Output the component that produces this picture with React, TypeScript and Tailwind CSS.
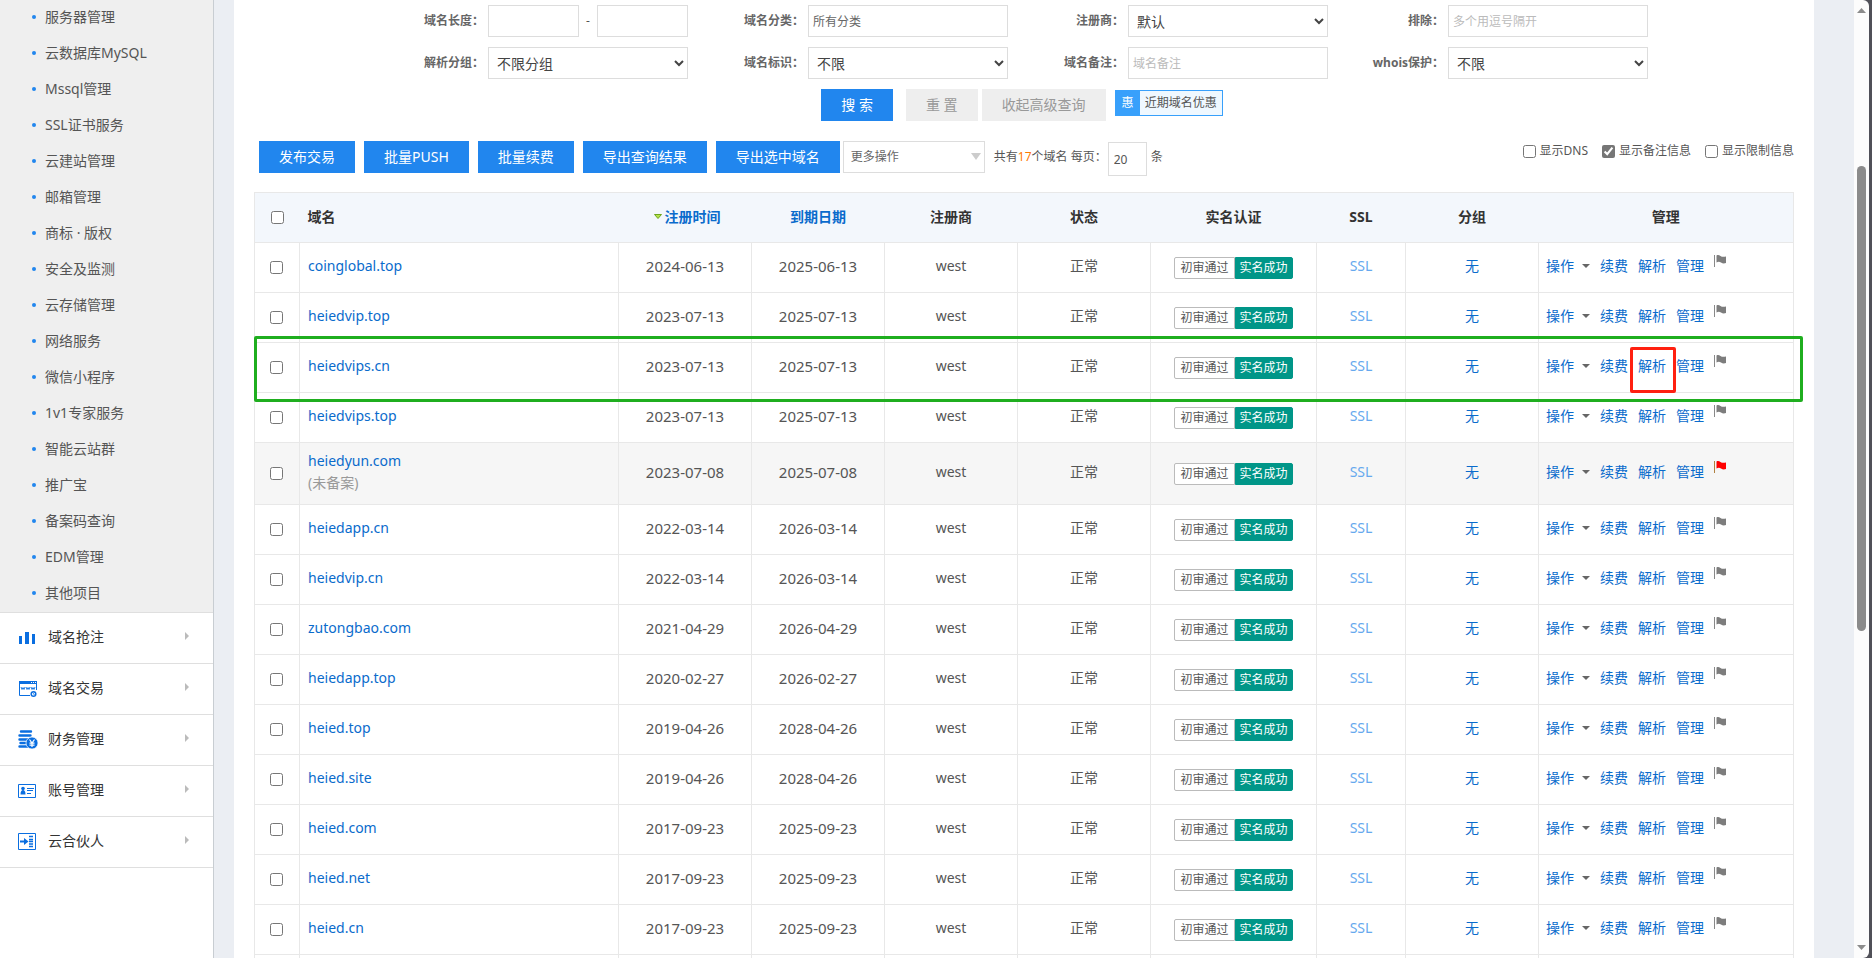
import { useState } from "react";
import type { ReactNode } from "react";

type Domain = {
  name: string;
  registered: string;
  expires: string;
  note?: string;
  flagged?: boolean;
  marked?: boolean;
};

const SUB_MENU = [
  "服务器管理",
  "云数据库MySQL",
  "Mssql管理",
  "SSL证书服务",
  "云建站管理",
  "邮箱管理",
  "商标 · 版权",
  "安全及监测",
  "云存储管理",
  "网络服务",
  "微信小程序",
  "1v1专家服务",
  "智能云站群",
  "推广宝",
  "备案码查询",
  "EDM管理",
  "其他项目",
];

const DOMAINS: Domain[] = [
  { name: "coinglobal.top", registered: "2024-06-13", expires: "2025-06-13" },
  { name: "heiedvip.top", registered: "2023-07-13", expires: "2025-07-13" },
  { name: "heiedvips.cn", registered: "2023-07-13", expires: "2025-07-13", marked: true },
  { name: "heiedvips.top", registered: "2023-07-13", expires: "2025-07-13" },
  { name: "heiedyun.com", registered: "2023-07-08", expires: "2025-07-08", note: "(未备案)", flagged: true },
  { name: "heiedapp.cn", registered: "2022-03-14", expires: "2026-03-14" },
  { name: "heiedvip.cn", registered: "2022-03-14", expires: "2026-03-14" },
  { name: "zutongbao.com", registered: "2021-04-29", expires: "2026-04-29" },
  { name: "heiedapp.top", registered: "2020-02-27", expires: "2026-02-27" },
  { name: "heied.top", registered: "2019-04-26", expires: "2028-04-26" },
  { name: "heied.site", registered: "2019-04-26", expires: "2028-04-26" },
  { name: "heied.com", registered: "2017-09-23", expires: "2025-09-23" },
  { name: "heied.net", registered: "2017-09-23", expires: "2025-09-23" },
  { name: "heied.cn", registered: "2017-09-23", expires: "2025-09-23" },
];

const ChartIcon = () => (
  <svg width="20" height="20" viewBox="0 0 20 20" fill="#0a6ee0" aria-hidden="true">
    <path d="M1 8h3v8H1zM7 4h4v12H7zM14 6h3v10h-3z" />
  </svg>
);

const BrowserIcon = () => (
  <svg width="20" height="20" viewBox="0 0 20 20" fill="none" stroke="#0a6ee0" aria-hidden="true">
    <path d="M12 16.5H1.5v-14h17V11" />
    <path d="M1 3.5h18" strokeWidth="3" />
    <path d="M13 3.5h1M15 3.5h1M17 3.5h1" stroke="#fff" />
    <path d="M3 8l1 2.500 1-2 1 2 1-2.500M8 8l1 2.500 1-2 1 2 1-2.500M13 8l1 2.500 1-2 1 2 1-2.500" strokeWidth="0.900" />
    <circle cx="15.500" cy="15" r="2.300" strokeWidth="1.500" />
    <path d="M15 14.500l1.500 1" />
  </svg>
);

const CoinsIcon = () => (
  <svg width="20" height="20" viewBox="0 0 20 20" fill="none" stroke="#0a6ee0" aria-hidden="true">
    <path
      d="M3 1.500h10M1.500 5.500h11M1.500 9.500h8M2.500 13h6M1.500 16.500h8"
      strokeWidth="2.400"
      strokeLinecap="round"
    />
    <circle cx="14" cy="13" r="6" fill="#0a6ee0" stroke="#fff" strokeWidth="0.700" />
    <path d="M11.500 9.500L14 13l2.500-3.500M14 13v4M11.500 13.200h5M11.500 15.200h5" stroke="#fff" strokeWidth="1.200" />
  </svg>
);

const CardIcon = () => (
  <svg width="20" height="20" viewBox="0 0 20 20" fill="none" stroke="#0a6ee0" aria-hidden="true">
    <path d="M.5 3.500h17v13H.5z" />
    <circle cx="5" cy="7.500" r="1.800" fill="#0a6ee0" stroke="none" />
    <path d="M2.500 13.500c0-3 1-4.500 2.500-4.500s2.500 1.500 2.500 4.500z" fill="#0a6ee0" stroke="none" />
    <path d="M9 7.500h7M9 9.500h6M9 12.500h4" />
  </svg>
);

const PartnerIcon = () => (
  <svg width="20" height="20" viewBox="0 0 20 20" fill="none" stroke="#0a6ee0" aria-hidden="true">
    <path d="M.5 1.500h17v16H.5z" />
    <path d="M2 9.500h5" strokeWidth="2" />
    <path d="M6 6l4.500 3.500L6 13z" fill="#0a6ee0" stroke="none" />
    <path d="M11 4.500h4M11 7.500h4M11 9.500h4M11 12h4M11 14.500h4" strokeWidth="1.500" />
  </svg>
);

const Flag = ({ red }: { red?: boolean }) => (
  <svg width="12" height="12" viewBox="0 0 12 12" aria-hidden="true">
    <path d="M0 0h1v12H0z" fill={red ? "#b08040" : "#888"} />
    <path
      d="M2.500 0.500c1.500-.8 2.500-.5 4 .5s3 1 5.500.500v6.500c-2 .8-3.500.5-5-.500s-3-1-4.500 0z"
      fill={red ? "#ff0000" : "#7d7d7d"}
    />
  </svg>
);

const MAIN_MENU = [
  { label: "域名抢注", icon: <ChartIcon /> },
  { label: "域名交易", icon: <BrowserIcon /> },
  { label: "财务管理", icon: <CoinsIcon /> },
  { label: "账号管理", icon: <CardIcon /> },
  { label: "云合伙人", icon: <PartnerIcon /> },
];

const Sidebar = () => (
  <nav className="w-[214px] shrink-0 border-r border-[#c8cdd2] bg-white">
    <ul className="border-b border-[#dfdfdf] bg-[#efefef]">
      {SUB_MENU.map((item) => (
        <li key={item} className="flex h-9 items-center gap-[9px] pb-0.5 pl-8">
          <span className="size-1 rounded-full bg-[#2186ee]" />
          <a href="#" className="text-[#555]">
            {item}
          </a>
        </li>
      ))}
    </ul>
    <ul>
      {MAIN_MENU.map((item) => (
        <li key={item.label} className="border-b border-[#dfdfdf]">
          <a href="#" className="flex h-[50px] items-center pl-[18px] pr-6 text-[#333]">
            {item.icon}
            <span className="ml-2.5 flex-1 pb-0.5">{item.label}</span>
            <svg className="mb-1" width="4" height="8" viewBox="0 0 4 8" fill="#bbb" aria-hidden="true">
              <path d="M0 0l4 4-4 4z" />
            </svg>
          </a>
        </li>
      ))}
    </ul>
  </nav>
);

const fieldClass = "h-8 w-[200px] border border-[#ddd] bg-white";
const textClass = "px-1 text-xs text-[#666] placeholder:text-[#bbb]";
const selectClass = "px-1 text-sm text-[#444]";

const Field = ({ id, label, children }: { id: string; label: string; children: ReactNode }) => (
  <div className="flex items-center">
    <label htmlFor={id} className="w-[120px] pr-1 text-right text-xs font-bold text-[#666]">
      {label}
    </label>
    {children}
  </div>
);

const SearchForm = () => (
  <form className="pt-[5px]">
    <div className="grid grid-cols-[repeat(4,320px)] justify-center gap-y-2.5 pr-8">
      <Field id="len-min" label="域名长度：">
        <div className="flex w-[200px] items-center justify-between">
          <input id="len-min" className="h-8 w-[91px] border border-[#ddd] px-1 text-xs" />
          <span className="text-xs">-</span>
          <input aria-label="最大长度" className="h-8 w-[91px] border border-[#ddd] px-1 text-xs" />
        </div>
      </Field>
      <Field id="category" label="域名分类：">
        <input id="category" className={`${fieldClass} ${textClass}`} defaultValue="所有分类" readOnly />
      </Field>
      <Field id="registrar" label="注册商：">
        <select id="registrar" className={`${fieldClass} ${selectClass}`}>
          <option>默认</option>
        </select>
      </Field>
      <Field id="exclude" label="排除：">
        <input id="exclude" className={`${fieldClass} ${textClass}`} placeholder="多个用逗号隔开" />
      </Field>
      <Field id="dns-group" label="解析分组：">
        <select id="dns-group" className={`${fieldClass} ${selectClass}`}>
          <option>不限分组</option>
        </select>
      </Field>
      <Field id="mark" label="域名标识：">
        <select id="mark" className={`${fieldClass} ${selectClass}`}>
          <option>不限</option>
        </select>
      </Field>
      <Field id="remark" label="域名备注：">
        <input id="remark" className={`${fieldClass} ${textClass}`} placeholder="域名备注" />
      </Field>
      <Field id="whois" label="whois保护：">
        <select id="whois" className={`${fieldClass} ${selectClass}`}>
          <option>不限</option>
        </select>
      </Field>
    </div>
    <div className="mt-2.5 flex justify-center pr-1">
      <button type="button" className="h-8 bg-[#2186ee] px-5 text-white">
        搜 索
      </button>
      <button type="button" className="ml-[13px] h-8 bg-[#eee] px-5 text-[#999]">
        重 置
      </button>
      <button type="button" className="ml-1 h-8 bg-[#eee] px-5 text-[#999]">
        收起高级查询
      </button>
      <a
        href="#"
        className="ml-[9px] mt-px flex h-[26px] border border-[#38a0fb] bg-[#eff8ff] text-xs leading-6 text-[#555]"
      >
        <span className="w-6 bg-[#38a0fb] text-center text-white">惠</span>
        <span className="px-[5px]">近期域名优惠</span>
      </a>
    </div>
  </form>
);

const ACTIONS = ["发布交易", "批量PUSH", "批量续费", "导出查询结果", "导出选中域名"];

const Toolbar = () => {
  const [shown, setShown] = useState<Record<string, boolean>>({ 显示备注信息: true });

  return (
    <div className="mt-5 flex items-start justify-between pl-[5px]">
      <div className="flex items-start">
        <div className="flex gap-[9px]">
          {ACTIONS.map((label) => (
            <button key={label} type="button" className="h-8 bg-[#2186ee] px-5 text-white">
              {label}
            </button>
          ))}
        </div>
        <div className="relative ml-[3px]">
          <select
            aria-label="更多操作"
            className="h-8 w-[142px] appearance-none border border-[#ddd] bg-white px-[7px] text-xs text-[#666]"
          >
            <option>更多操作</option>
          </select>
          <svg
            className="pointer-events-none absolute right-1 top-3"
            width="10"
            height="7"
            viewBox="0 0 10 7"
            fill="#ccc"
            aria-hidden="true"
          >
            <path d="M0 0h10L5 7z" />
          </svg>
        </div>
        <label htmlFor="page-size" className="ml-[9px] mr-px text-xs leading-8">
          共有<span className="text-[#ff7800]">17</span>个域名 每页：
        </label>
        <input
          id="page-size"
          className="mt-px h-[34px] w-[39px] border border-[#ddd] px-[5px] text-xs"
          defaultValue="20"
        />
        <span className="ml-1 text-xs leading-8">条</span>
      </div>
      <div className="flex gap-[14px] text-xs leading-5">
        {["显示DNS", "显示备注信息", "显示限制信息"].map((label) => (
          <label key={label} className="flex items-center gap-1">
            <input
              type="checkbox"
              className="size-[13px] accent-[#767676]"
              checked={Boolean(shown[label])}
              onChange={(event) => setShown({ ...shown, [label]: event.target.checked })}
            />
            {label}
          </label>
        ))}
      </div>
    </div>
  );
};

const cell = "border border-[#e8e8e8] pb-[3px]";

const DomainRow = ({ domain }: { domain: Domain }) => (
  <tr className={domain.flagged ? "h-[62px] bg-[#f6f6f6]" : "h-[50px]"}>
    <td className="border border-[#e8e8e8] pr-0.5">
      <input type="checkbox" aria-label={domain.name} className="mx-auto block size-[13px]" />
    </td>
    <td className={`${cell} pl-2 text-left`}>
      <a href="#" className="text-[#0a6bcc]">
        {domain.name}
      </a>
      {domain.note && <p className="text-[#999]">{domain.note}</p>}
    </td>
    <td className={`${cell} text-[15px]`}>{domain.registered}</td>
    <td className={`${cell} text-[15px]`}>{domain.expires}</td>
    <td className={cell}>west</td>
    <td className={cell}>正常</td>
    <td className={cell}>
      <div className="mt-[3px] flex justify-center text-xs leading-5">
        <span className="rounded-l-xs border border-[#bbb] bg-white px-[5px]">初审通过</span>
        <span className="rounded-r-xs border border-[#009688] bg-[#009688] px-1 text-white">实名成功</span>
      </div>
    </td>
    <td className={cell}>
      <a href="#" className="text-[#66a9ee]">
        SSL
      </a>
    </td>
    <td className={cell}>
      <a href="#" className="text-[#0a6bcc]">
        无
      </a>
    </td>
    <td className={`${cell} pl-[7px]`}>
      <div className="flex items-center gap-2.5 text-[#0a6bcc]">
        <a href="#" className="flex items-center gap-2">
          操作
          <svg width="8" height="4" viewBox="0 0 8 4" fill="#666" aria-hidden="true">
            <path d="M0 0h8L4 4z" />
          </svg>
        </a>
        <a href="#">续费</a>
        <a href="#" className="relative">
          解析
          {domain.marked && (
            <span className="absolute -bottom-4 -left-2 -right-2.5 -top-2 rounded-xs border-3 border-[#ff2010]" />
          )}
        </a>
        <a href="#">管理</a>
        <span className="pb-2.5">
          <Flag red={domain.flagged} />
        </span>
      </div>
    </td>
  </tr>
);

const DomainTable = () => (
  <div className="relative mt-4">
    <table className="w-full table-fixed border-collapse text-center">
      <colgroup>
        <col className="w-[45px]" />
        <col />
        <col className="w-[133px]" />
        <col className="w-[133px]" />
        <col className="w-[133px]" />
        <col className="w-[133px]" />
        <col className="w-[166px]" />
        <col className="w-[89px]" />
        <col className="w-[133px]" />
        <col className="w-[255px]" />
      </colgroup>
      <thead>
        <tr className="h-[50px] border border-[#e8e8e8] bg-[#f3f7fc] text-[#333]">
          <th>
            <input type="checkbox" aria-label="全选" className="mx-auto block size-[13px]" />
          </th>
          <th className="pb-0.5 pl-2 text-left">域名</th>
          <th className="pb-0.5">
            <a href="#" className="flex items-center justify-center text-[#0a6bcc]">
              <svg className="ml-1 mr-[3px]" width="8" height="5" viewBox="0 0 8 5" aria-hidden="true">
                <path d="M.5.500h7L4 4.500z" fill="#b4e34a" stroke="#6fa51c" />
              </svg>
              注册时间
            </a>
          </th>
          <th className="pb-0.5">
            <a href="#" className="text-[#0a6bcc]">
              到期日期
            </a>
          </th>
          <th className="pb-0.5">注册商</th>
          <th className="pb-0.5">状态</th>
          <th className="pb-0.5">实名认证</th>
          <th className="pb-0.5">SSL</th>
          <th className="pb-0.5">分组</th>
          <th className="pb-0.5">管理</th>
        </tr>
      </thead>
      <tbody>
        {DOMAINS.map((domain) => (
          <DomainRow key={domain.name} domain={domain} />
        ))}
        <tr className="h-[50px]">
          {Array.from({ length: 10 }, (_, i) => (
            <td key={i} className={cell} />
          ))}
        </tr>
      </tbody>
    </table>
    {/* frame round the third row */}
    <div className="pointer-events-none absolute -right-[9px] left-0 top-36 h-[66px] rounded-xs border-3 border-[#1fae1f]" />
  </div>
);

const ScrollTrack = () => (
  <div className="w-[18px] shrink-0 bg-[#505058] pr-[3px]">
    <div className="flex h-full flex-col items-center rounded-r-md bg-[#fcfcfc] py-2">
      <svg width="9" height="5" viewBox="0 0 9 5" fill="#8b8b8b" aria-hidden="true">
        <path d="M4.500 0L9 5H0z" />
      </svg>
      <div className="grow-[153]" />
      <div className="w-[9px] grow-[465] rounded-full bg-[#8b8b8b]" />
      <div className="grow-[314]" />
      <svg width="9" height="5" viewBox="0 0 9 5" fill="#8b8b8b" aria-hidden="true">
        <path d="M0 0h9L4.500 5z" />
      </svg>
    </div>
  </div>
);

export default function App() {
  return (
    <div className="flex h-screen overflow-hidden bg-[#ebeef3] font-['Noto_Sans','Noto_Sans_CJK_SC',sans-serif] text-sm leading-[22px] text-[#555]">
      <Sidebar />
      <main className="ml-5 mr-10 min-w-0 flex-1 bg-white px-5">
        <SearchForm />
        <Toolbar />
        <DomainTable />
      </main>
      <ScrollTrack />
    </div>
  );
}
